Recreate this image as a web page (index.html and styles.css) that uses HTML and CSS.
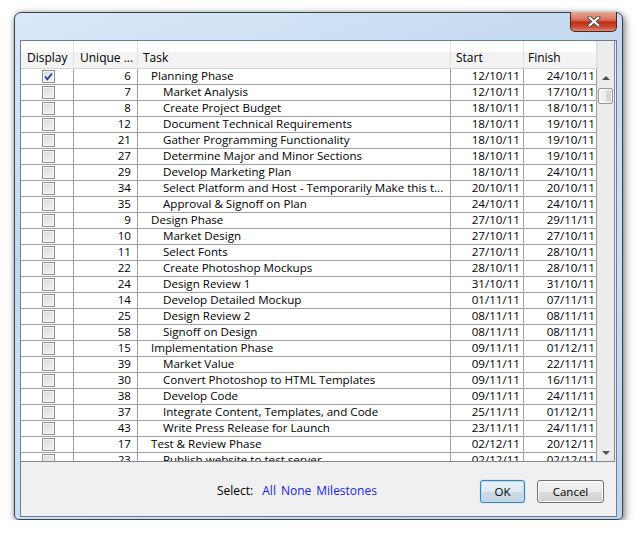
FILE: index.html
```html
<!DOCTYPE html>
<html lang="en">

<head>
    <meta charset="UTF-8">
    <title>Select Tasks</title>
    <link rel="stylesheet" href="styles.css">
</head>

<body>
    <div class="window">
        <div class="titlebar">
            <a href="javascript:;" class="close" title="Close">
                <svg width="14" height="11" viewBox="0 0 14 11">
                    <path d="M2.5 1.5 L11.5 9.5 M11.5 1.5 L2.5 9.5" stroke="#4d4d4d" stroke-width="4" stroke-linecap="round" />
                    <path d="M2.5 1.5 L11.5 9.5 M11.5 1.5 L2.5 9.5" stroke="#ffffff" stroke-width="2" stroke-linecap="round" />
                </svg>
            </a>
        </div>
        <div class="client">
            <div class="grid">
                <div class="list">
                    <div class="list--head">
                        <div class="cell">Display</div>
                        <div class="cell">Unique ...</div>
                        <div class="cell">Task</div>
                        <div class="cell">Start</div>
                        <div class="cell">Finish</div>
                    </div>
                    <div class="list--body" id="rows"></div>
                </div>
                <div class="scrollbar">
                    <div class="scrollbar--corner"></div>
                    <div class="scrollbar--btn"><span class="arrow arrow--up"></span></div>
                    <div class="scrollbar--thumb"></div>
                    <div class="scrollbar--track"></div>
                    <div class="scrollbar--btn"><span class="arrow arrow--down"></span></div>
                </div>
            </div>
            <div class="footer">
                <span class="footer--label">Select:</span>
                <a href="javascript:;" class="footer--link">All</a>
                <a href="javascript:;" class="footer--link">None</a>
                <a href="javascript:;" class="footer--link">Milestones</a>
                <div class="footer--buttons">
                    <button class="btn btn--default">OK</button>
                    <button class="btn">Cancel</button>
                </div>
            </div>
        </div>
    </div>

    <script>
        var tasks = [
            [6, 0, 'Planning Phase', '12/10/11', '24/10/11', true],
            [7, 1, 'Market Analysis', '12/10/11', '17/10/11'],
            [8, 1, 'Create Project Budget', '18/10/11', '18/10/11'],
            [12, 1, 'Document Technical Requirements', '18/10/11', '19/10/11'],
            [21, 1, 'Gather Programming Functionality', '18/10/11', '19/10/11'],
            [27, 1, 'Determine Major and Minor Sections', '18/10/11', '19/10/11'],
            [29, 1, 'Develop Marketing Plan', '18/10/11', '24/10/11'],
            [34, 1, 'Select Platform and Host - Temporarily Make this t...', '20/10/11', '20/10/11'],
            [35, 1, 'Approval & Signoff on Plan', '24/10/11', '24/10/11'],
            [9, 0, 'Design Phase', '27/10/11', '29/11/11'],
            [10, 1, 'Market Design', '27/10/11', '27/10/11'],
            [11, 1, 'Select Fonts', '27/10/11', '28/10/11'],
            [22, 1, 'Create Photoshop Mockups', '28/10/11', '28/10/11'],
            [24, 1, 'Design Review 1', '31/10/11', '31/10/11'],
            [14, 1, 'Develop Detailed Mockup', '01/11/11', '07/11/11'],
            [25, 1, 'Design Review 2', '08/11/11', '08/11/11'],
            [58, 1, 'Signoff on Design', '08/11/11', '08/11/11'],
            [15, 0, 'Implementation Phase', '09/11/11', '01/12/11'],
            [39, 1, 'Market Value', '09/11/11', '22/11/11'],
            [30, 1, 'Convert Photoshop to HTML Templates', '09/11/11', '16/11/11'],
            [38, 1, 'Develop Code', '09/11/11', '24/11/11'],
            [37, 1, 'Integrate Content, Templates, and Code', '25/11/11', '01/12/11'],
            [43, 1, 'Write Press Release for Launch', '23/11/11', '24/11/11'],
            [17, 0, 'Test & Review Phase', '02/12/11', '20/12/11'],
            [23, 1, 'Publish website to test server', '02/12/11', '02/12/11']
        ];

        var tick = '<svg width="11" height="11" viewBox="0 0 11 11"><path d="M2 5.5 L4.3 8.3 L9 2.5" fill="none" stroke="#2c3f8a" stroke-width="1.8" /></svg>';
        var rows = document.getElementById('rows');
        var html = '';
        tasks.forEach(function (t) {
            html += '<div class="row">' +
                '<div class="cell cell--check"><span class="checkbox">' + (t[5] ? tick : '') + '</span></div>' +
                '<div class="cell cell--num">' + t[0] + '</div>' +
                '<div class="cell cell--task level-' + t[1] + '"></div>' +
                '<div class="cell cell--date">' + t[3] + '</div>' +
                '<div class="cell cell--date cell--last">' + t[4] + '</div>' +
                '</div>';
        });
        rows.innerHTML = html;
        rows.querySelectorAll('.cell--task').forEach(function (el, i) {
            el.textContent = tasks[i][2];
        });
    </script>
</body>

</html>
```

FILE: styles.css
```css
/* Base */
body {
    margin: 0;
    padding: 12px 0 0 14px;
    background-color: #ffffff;
    font-family: "Open Sans", "Liberation Sans", sans-serif;
    color: #000000;
}

a {
    text-decoration: none;
}

/* Window frame */
.window {
    box-sizing: border-box;
    width: 609px;
    height: 508px;
    padding: 0 5px 2px 5px;
    border: 1px solid #3a4450;
    border-radius: 7px 7px 5px 5px;
    background: linear-gradient(160deg, #d9e8f8 0%, #c3d8ef 35%, #cfe1f5 55%, #bcd4ee 100%);
    box-shadow: 2px 3px 9px rgba(0, 0, 0, 0.45), 0 0 4px rgba(0, 0, 0, 0.25);
    display: flex;
    flex-direction: column;
}

.titlebar {
    height: 27px;
    display: flex;
    justify-content: flex-end;
    align-items: flex-start;
}

.close {
    box-sizing: border-box;
    width: 47px;
    height: 20px;
    margin-top: -1px;
    border: 1px solid #52231a;
    border-top: none;
    border-radius: 0 0 5px 5px;
    background: linear-gradient(#e9a898 0%, #d8735d 40%, #bf2e14 55%, #cc4e34 80%, #e08a76 100%);
    display: flex;
    align-items: center;
    justify-content: center;
}

/* Client area */
.client {
    flex: 1;
    display: flex;
    flex-direction: column;
    border: 1px solid #6c7e91;
    background-color: #f0f0f0;
}

.grid {
    box-sizing: border-box;
    width: 594px;
    height: 421px;
    display: flex;
    border-right: 1px solid #828790;
    border-bottom: 1px solid #828790;
    background-color: #ffffff;
    overflow: hidden;
}

.list {
    width: 576px;
}

.list--head,
.row {
    display: grid;
    grid-template-columns: 53px 64px 313px 73px 73px;
}

.list--head {
    box-sizing: border-box;
    height: 28px;
    border-bottom: 1px solid #d5d5d5;
    background: linear-gradient(#ffffff 0%, #ffffff 40%, #f3f3f3 40%, #f3f3f3 100%);
    font-size: 12px;
}

.list--head .cell {
    box-sizing: border-box;
    padding: 8px 0 0 6px;
    border-right: 1px solid #e2e2e2;
    white-space: nowrap;
}

.list--head .cell:nth-child(3) {
    padding-left: 5px;
}

.list--head .cell:nth-child(4) {
    padding-left: 5px;
}

.list--head .cell:nth-child(5) {
    padding-left: 4px;
}

.list--body {
    height: 392px;
    overflow: hidden;
}

.row {
    box-sizing: border-box;
    height: 16px;
    border-bottom: 1px solid #a0a0a0;
    font-size: 11.6px;
    line-height: 14px;
}

.row .cell {
    box-sizing: border-box;
    border-right: 1px solid #a0a0a0;
    white-space: nowrap;
    overflow: hidden;
}

.cell--check {
    display: flex;
    justify-content: center;
    align-items: center;
    padding-left: 2px;
}

.checkbox {
    box-sizing: border-box;
    width: 13px;
    height: 13px;
    border: 1px solid #8e8f8f;
    background: linear-gradient(135deg, #d8d8d8 0%, #f6f6f6 100%);
    box-shadow: inset 0 0 0 1px #f4f4f4;
    display: flex;
    align-items: center;
    justify-content: center;
}

.cell--num {
    text-align: right;
    padding-right: 6px;
}

.cell--task.level-0 {
    padding-left: 13px;
}

.cell--task.level-1 {
    padding-left: 25px;
}

.cell--date {
    text-align: right;
    padding-right: 3px;
}

.cell--date.cell--last {
    padding-right: 1px;
}

/* Scrollbar */
.scrollbar {
    width: 17px;
    display: flex;
    flex-direction: column;
    background-color: #ececec;
    box-shadow: inset 1px 0 0 #e2e2e2;
}

.scrollbar--corner {
    height: 28px;
}

.scrollbar--btn {
    height: 17px;
    display: flex;
    align-items: center;
    justify-content: center;
}

.arrow {
    width: 0;
    height: 0;
    border-left: 4px solid transparent;
    border-right: 4px solid transparent;
}

.arrow--up {
    border-bottom: 4px solid #4f4f4f;
}

.arrow--down {
    border-top: 4px solid #4f4f4f;
}

.scrollbar--thumb {
    box-sizing: border-box;
    width: 15px;
    height: 16px;
    margin: 2px 0 0 1px;
    border: 1px solid #979797;
    border-radius: 2px;
    background: linear-gradient(90deg, #f5f5f5 0%, #eaeaea 50%, #d9d9d9 51%, #d4d4d4 100%);
    box-shadow: inset 0 0 0 1px #fbfbfb;
}

.scrollbar--track {
    flex: 1;
}

/* Footer */
.footer {
    flex: 1;
    display: flex;
    align-items: center;
    padding: 2px 12px 0 196px;
    font-size: 12px;
}

.footer--label {
    margin-right: 9px;
}

.footer--link {
    color: #2020f0;
    margin-right: 5px;
}

.footer--buttons {
    margin-left: auto;
    display: flex;
    gap: 12px;
    padding-top: 3px;
}

.btn {
    box-sizing: border-box;
    width: 67px;
    height: 23px;
    padding: 0;
    border: 1px solid #707070;
    border-radius: 3px;
    background: linear-gradient(#f2f2f2 0%, #ebebeb 50%, #dddddd 51%, #cfcfcf 100%);
    box-shadow: inset 0 0 0 1px #fcfcfc;
    font-family: "Open Sans", "Liberation Sans", sans-serif;
    font-size: 11.5px;
    color: #000000;
}

.btn--default {
    width: 45px;
    border-color: #3c7fb1;
    background: linear-gradient(#e8f3fa 0%, #dde9f1 50%, #cbdbe6 51%, #c2d4e0 100%);
    box-shadow: inset 0 0 0 1px #b5e0fa, 0 0 1px #48a0e0;
}
```
